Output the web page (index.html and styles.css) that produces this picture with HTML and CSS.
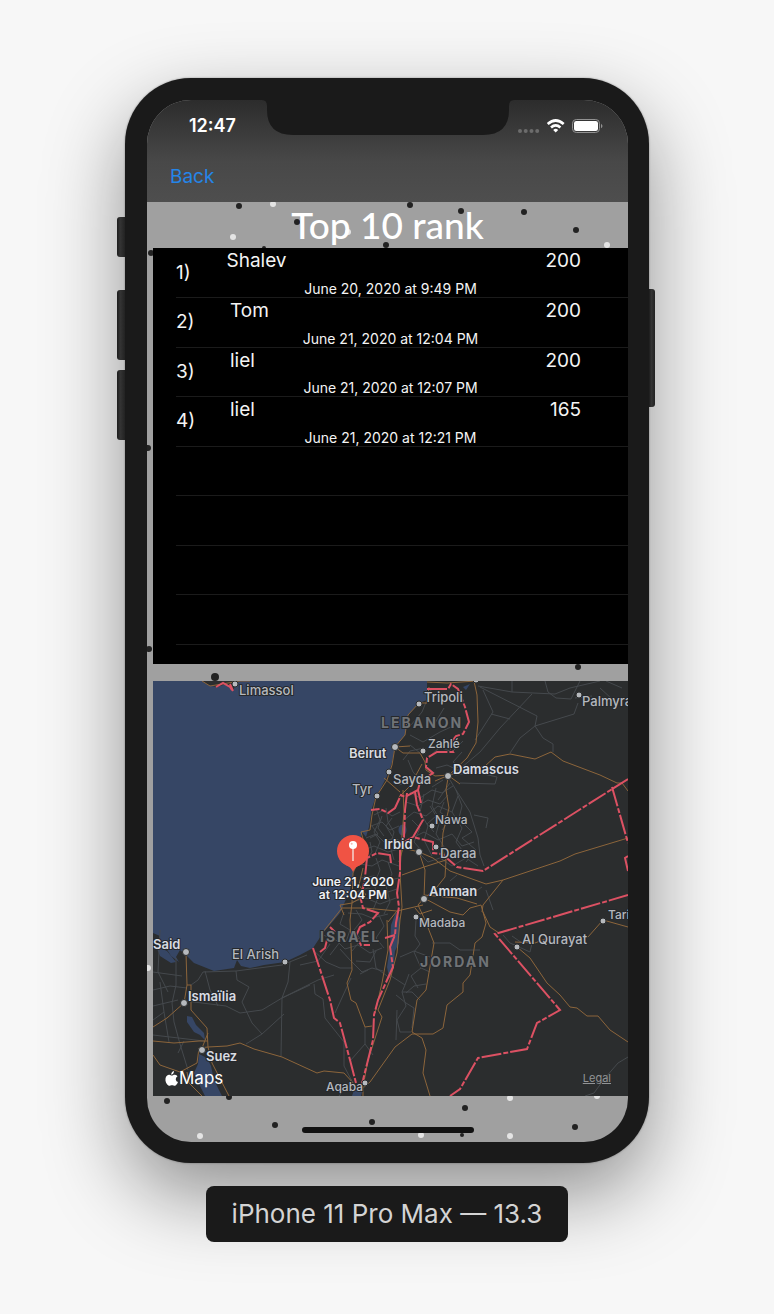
FILE: index.html
```html
<!DOCTYPE html>
<html lang="en">
<head>
<meta charset="utf-8">
<meta name="viewport" content="width=device-width, initial-scale=1">
<title>Top 10 rank</title>
<link rel="stylesheet" href="styles.css">
</head>
<body>
<main class="stage">
  <div class="phone">
    <span class="side-button mute"></span>
    <span class="side-button volume-up"></span>
    <span class="side-button volume-down"></span>
    <span class="side-button power"></span>
    <div class="screen">
      <svg class="speckles" viewBox="147 100 481 1042" aria-hidden="true">
        <g fill="#222">
          <circle cx="239" cy="206" r="3"/><circle cx="297" cy="222" r="3"/><circle cx="410" cy="205" r="3"/><circle cx="461" cy="211" r="3"/><circle cx="524" cy="212" r="3"/><circle cx="576" cy="230" r="3"/><circle cx="386" cy="245" r="3"/><circle cx="151" cy="253" r="3"/><circle cx="264" cy="248" r="2"/>
          <circle cx="148" cy="448" r="3"/><circle cx="149" cy="649" r="3"/><circle cx="215" cy="677" r="4"/><circle cx="578" cy="667" r="3"/>
          <circle cx="167" cy="1101" r="3"/><circle cx="229" cy="1097" r="3"/><circle cx="275" cy="1125" r="3"/><circle cx="372" cy="1122" r="3"/><circle cx="465" cy="1108" r="3"/><circle cx="575" cy="1127" r="3"/><circle cx="462" cy="1135" r="2"/>
        </g>
        <g fill="#e4e4e4">
          <circle cx="273" cy="204" r="3"/><circle cx="233" cy="237" r="3"/><circle cx="348" cy="232" r="3"/><circle cx="607" cy="245" r="3"/><circle cx="148" cy="968" r="3"/><circle cx="200" cy="1136" r="3"/><circle cx="421" cy="1135" r="3"/><circle cx="510" cy="1098" r="3"/><circle cx="510" cy="1136" r="3"/><circle cx="597" cy="1096" r="3"/>
        </g>
      </svg>
      <header class="top-bar">
        <div class="status">
          <time class="clock">12:47</time>
          <svg class="status-icons" width="86" height="16" viewBox="0 0 86 16" aria-label="Wi-Fi connected, battery full">
            <g fill="#6c6c6c"><circle cx="3" cy="13" r="2"/><circle cx="8.700" cy="13" r="2"/><circle cx="14.500" cy="13" r="2"/><circle cx="20.200" cy="13" r="2"/></g>
            <g fill="none" stroke="#fff" stroke-width="2.700"><path d="M30.700 6Q38.700-1 46.700 6"/><path d="M34 9.400Q38.700 5.300 43.400 9.400"/></g>
            <path d="M38.700 14.500L36.200 11.900Q38.700 9.800 41.200 11.900Z" fill="#fff"/>
            <rect x="55.500" y="1.500" width="27" height="13" rx="3.800" fill="none" stroke="#929292"/>
            <rect x="57" y="3" width="24" height="10" rx="2.300" fill="#fff"/>
            <path d="M84 5.700Q87 8 84 10.300Z" fill="#929292"/>
          </svg>
        </div>
        <svg class="notch" viewBox="0 0 252 35" aria-hidden="true"><path d="M0 0H252Q247 0 247 6V10Q247 35 221 35H31Q5 35 5 10V6Q5 0 0 0Z" fill="#1a1a1a"/></svg>
        <nav class="nav"><button class="back" type="button">Back</button></nav>
      </header>
      <h1 class="title">Top 10 rank</h1>
      <section class="scores" aria-label="Scores">
        <table class="ranking">
          <tr><td class="rank">1)</td><td class="name"><div class="name-box"><span>Shalev</span></div></td><td class="date">June 20, 2020 at 9:49 PM</td><td class="score">200</td></tr>
          <tr><td class="rank">2)</td><td class="name"><div class="name-box"><span>Tom</span></div></td><td class="date">June 21, 2020 at 12:04 PM</td><td class="score">200</td></tr>
          <tr><td class="rank">3)</td><td class="name"><div class="name-box"><span>liel</span></div></td><td class="date">June 21, 2020 at 12:07 PM</td><td class="score">200</td></tr>
          <tr><td class="rank">4)</td><td class="name"><div class="name-box"><span>liel</span></div></td><td class="date">June 21, 2020 at 12:21 PM</td><td class="score">165</td></tr>
          <tr><td colspan="4"></td></tr>
          <tr><td colspan="4"></td></tr>
          <tr><td colspan="4"></td></tr>
          <tr><td colspan="4"></td></tr>
        </table>
      </section>
      <section class="map" aria-label="Map">
        <svg class="map-canvas" viewBox="153 681 475 415">
          <rect x="153" y="681" width="475" height="415" fill="#2b2d2e"/>
          <!-- water -->
          <g fill="#364665">
            <path d="M153 681H427V700L419 703 408 715 405 735 395 747 392 762 389 772 380 790 376 796 372 808 369 827 366 837 362 832 360 842 356 862 353 873 350 890 340 913 323 933 313 948 300 955 285 962 264 965 250 968 241 966 237 960 234 968 214 971 204 967 194 963 187 956 180 950 176 957 179 962 171 956 166 948 158 944 160 936 153 933Z"/>
            <path d="M156 946L167 951 176 962 171 963 160 956ZM187 1016L192 1017 196 1025 204 1033 205 1040 200 1035 194 1032 187 1022Z"/>
            <path d="M199 1054L207 1058 211 1066 214 1080 222 1096H205L199 1084 194 1073 198 1064Z"/>
            <path d="M396 912L400 918 399 943 395 951 393 970 389 977 387 967 390 947 391 925Z"/>
            <ellipse cx="402.500" cy="830" rx="4" ry="5.500"/>
            <path d="M352 1096L354 1090 363 1088 361 1096ZM463 687L470 684 466 690Z"/>
          </g>
          <path d="M202 681L208 685 216 687 227 684 233 691 236 683 240 681Z" fill="#2b2d2e"/>
          <!-- minor roads -->
          <g class="road minor">
            <path d="M478 686L512 692 555 694 570 688 600 681M512 692V681M545 681L548 692 556 698 571 699 580 681M578 703L574 714 535 726 520 738 510 753M483 690L493 712 475 740M480 687L537 716 535 726 543 738 553 744V752M532 694L500 728 480 752 455 773M491 714L510 719M600 688L612 699M606 681L622 688M575 698L592 696"/>
            <path d="M455 775L475 772 497 777 495 784 460 783M450 780L456 790 470 812 474 825 478 838 480 855 484 866M456 790L462 806 458 822M474 815L488 818 486 828"/>
            <path d="M404 820L414 812 426 816 438 806 452 812M406 802L418 806 428 800 440 804 448 795M410 792L420 798 432 790 442 793 453 786M412 838L424 832 438 840 452 834 462 846 474 842M416 850L428 862 440 858 452 866 466 858 478 866M424 794L420 812 428 826 424 840 432 856M436 788L432 806 440 820 436 834 446 850M458 796L452 812 462 828 456 842 468 858M430 806L436 816 427 824 434 832M444 802L440 812 450 820 442 830M412 820L420 828 414 842 421 850M464 824L472 832 462 838 476 850 466 862"/>
            <path d="M374 815L384 810 392 816 400 812M371 826L382 822 390 830 399 826M366 838L376 834 384 842 394 838 402 842M364 850L374 846 388 852 399 849M360 864L372 866 382 860 399 866M360 878L374 876 386 881 399 878M356 892L368 888 382 894 397 889M352 902L366 898 380 904 396 898M348 913L362 914 372 918 388 914M376 808L380 820 374 832 380 842 374 856M386 808L388 822 394 832 390 846 394 860M376 858L380 870 374 884 378 898 372 912M388 862L392 874 386 886 390 902 384 914M382 816L378 828 384 836M370 842L372 852 366 860M344 912L340 924 350 930 346 942M356 910L362 920 354 930 361 940 352 951M378 913L384 926 376 938 384 948M372 826L378 834 370 838M392 818L386 826 392 836"/>
            <path d="M323 935L336 940 345 949 358 945 370 953 382 948M313 950L326 962 340 968 352 968M300 965L318 961 330 944M340 949L350 960 362 972 372 968 383 971M356 961L370 962 376 951M334 975L318 980 282 998M351 978L335 1013M373 949L376 968 390 978M330 955L340 942M368 970L360 974"/>
            <path d="M388 974L405 985 402 992 412 992 420 1000M405 985L409 974M402 992L406 1006 397 1020 400 1032 411 1032M406 1003L414 1008 412 1028M397 1010L396 1040M416 920L415 936 420 944 414 952 421 968 411 976 418 988M400 957L414 951 430 957M432 943L450 943 460 950 480 950M421 968L430 972M406 993L414 986 426 984M396 995L406 1003"/>
            <path d="M365 1027V1044L350 1061M365 1044L373 1055M314 984L315 994 323 999 325 1018 344 1042 344 1066 355 1087 336 1088M339 1096L352 1079"/>
            <path d="M153 990L170 986 187 988M153 1006L178 1000M160 930L158 972 168 992M176 958V985L172 1003 174 1022 180 1044 188 1070M191 985L198 980 203 972 236 971 282 965 307 955M236 971L237 980 249 987 242 1002 252 1023 262 1034 284 1014M186 1001L226 1006 240 1013 262 1010 282 998 310 985M290 962L288 982 282 998 281 1056M262 1034L246 1044M153 972L182 976M153 1020L164 1012 169 1042M153 1035L204 1041M184 1041L178 1053M205 971L210 990 218 1006M160 982L164 1012"/>
            <path d="M503 935L510 943 530 952 532 943 526 938M585 1096L594 1093 605 1078 618 1063 628 1057M486 890L493 910M512 936L522 943M450 881L457 875M455 920L447 926M482 887L470 895"/>
            <path d="M403 760L410 751 424 748M411 725L422 712 431 690M399 785L412 780 430 784M408 760L413 772 422 782M430 756L440 747 452 752 463 741M420 753L410 745M410 735L423 742 440 732 451 727M432 728L444 708M462 752L453 762 462 768M436 768L447 765 460 771M443 780L432 787M450 783L438 800"/>
          </g>
          <!-- highways -->
          <g class="road highway">
            <path d="M427 682L447 683 476 681M474 681L477 695 478 722 476 743 467 758 449 775M429 687L427 703 419 703 408 715 405 735 395 747 392 765 387 780 376 797 372 815 370 830 361 832 364 842 358 862 353 873"/>
            <path d="M395 747L403 753 420 753 425 762 426 770 435 776 449 775 485 766 495 757 510 754 535 759 551 752 563 761 600 775 617 783 622 783 628 791M410 746L395 747M435 781L449 775M399 797L410 786 422 764M384 778L400 792"/>
            <path d="M448 778L446 790 449 808 443 833 442 847 446 860 445 877 437 887 425 898M449 776L460 784"/>
            <path d="M419 852L425 870 424 898M403 848L419 852 433 858 450 871 486 884 503 880 560 861 575 854 628 838M503 880L483 905 482 912M404 848L396 840M402 875L424 867 446 860"/>
            <path d="M424 898L450 912 463 915 470 908 481 905 483 912 490 927 499 933M424 895L457 898 477 904M515 942L535 943 550 937 588 937 603 920 628 927M517 947L530 958 547 983 560 995 570 1007 577 1008 587 1016 598 1016 610 1030 628 1042"/>
            <path d="M486 923L482 937 475 943 470 975 463 983V992L447 1005 443 1028 433 1034H412L395 1047 370 1082 363 1088M486 923L483 912M424 898L418 905 425 920 434 943 426 990 417 1000 412 1032 422 1038 426 1050 423 1073 430 1096"/>
            <path d="M353 873L352 903 350 920 352 970 347 983 351 1000 356 1003 365 1027 372 1026M403 790L404 812 402 835 400 873 402 907 400 920 397 953 390 980 378 1010 382 1017 368 1060 363 1087V1096M387 920L388 950 382 983 375 1013M342 908H365L397 911 423 905M342 908L323 932M352 903L340 905 344 915M363 868L359 885 366 895 352 903M397 911L388 922M403 848L399 862M415 908L420 914 432 910"/>
            <path d="M186 953L187 985 184 1003 167 1018 153 1027M187 985H191V1010L207 1028 208 1047 227 1046 240 1043 254 1049 282 1057 317 1073 324 1071 344 1073 355 1085M153 1041L174 1043 199 1041H208M153 1055L160 1065 180 1072 197 1063 199 1048 208 1047 212 1063 229 1096M187 1072L189 1083 202 1096M208 1033L202 1048"/>
            <path d="M202 681L210 686 222 684 240 681H250"/>
          </g>
          <!-- borders -->
          <g class="border">
            <path d="M427 689H448L451 684 458 689 465 707 469 722 463 734 456 736 449 745 453 752H437L427 758 426 767 433 773 420 782 418 790 405 797 401 795 395 808 388 813 380 809 371 810"/>
            <path d="M415 792L417 805 423 820 413 837 433 842V853L442 854 457 867 483 871 628 779M413 837L404 842M418 790L421 803M612 787L628 843M628 856L625 858 628 871"/>
            <path d="M628 895L495 934 560 1010 537 1023 527 1049 478 1058 460 1089 450 1096"/>
            <path d="M313 948L330 1000 334 1018 340 1023 350 1060 356 1083 359 1088"/>
            <path d="M407 793L405 810 404 837 400 845V873L397 893 399 907 396 923 395 935 390 947 393 967 378 1000 374 1015 373 1040 363 1080 360 1088"/>
            <path d="M391 863L390 855 377 853 367 858 365 877 361 900 363 908 378 913 370 922 360 927 356 936 361 945 370 945M395 935L385 938M330 927L335 932M327 940L325 948 320 952"/>
            <path d="M216 687L223 683 230 687 232 690M230 684L233 691"/>
          </g>
          <g class="place">
            <circle cx="235" cy="684" r="3"/><circle cx="419" cy="704" r="3"/><circle cx="395" cy="747" r="3.500"/><circle cx="423" cy="751" r="3"/><circle cx="389" cy="772" r="3"/><circle cx="377" cy="796" r="3"/><circle cx="448" cy="776" r="3.500"/><circle cx="432" cy="826" r="3"/><circle cx="419" cy="852" r="3.500"/><circle cx="436" cy="847" r="3"/><circle cx="424" cy="899" r="3.500"/><circle cx="416" cy="917" r="3"/><circle cx="517" cy="947" r="3"/><circle cx="603" cy="921" r="3"/><circle cx="579" cy="695" r="3"/><circle cx="186" cy="952" r="3.500"/><circle cx="285" cy="962" r="3"/><circle cx="184" cy="1003" r="3.500"/><circle cx="202" cy="1050" r="3.500"/><circle cx="365" cy="1083" r="3"/><circle cx="476" cy="680" r="3"/>
          </g>
          <g class="country">
            <text x="381" y="728">LEBANON</text><text x="320" y="942">ISRAEL</text><text x="420" y="967">JORDAN</text>
          </g>
          <g class="city">
            <text x="239" y="695">Limassol</text><text x="424" y="702">Tripoli</text><text x="393" y="784">Sayda</text><text x="352" y="794">Tyr</text><text x="582" y="706">Palmyra</text><text x="522" y="944">Al Qurayat</text><text x="232" y="959">El Arish</text><text x="440" y="858">Daraa</text>
          </g>
          <g class="city small">
            <text x="428" y="748">Zahlé</text><text x="435" y="824">Nawa</text><text x="419" y="927">Madaba</text><text x="608" y="919">Tari</text><text x="326" y="1091">Aqaba</text>
          </g>
          <g class="city major">
            <text x="349" y="758">Beirut</text><text x="453" y="774">Damascus</text><text x="384" y="849">Irbid</text><text x="429" y="896">Amman</text><text x="153" y="949">Said</text><text x="188" y="1001">Ismaïlia</text><text x="206" y="1061">Suez</text>
          </g>
          <g>
            <circle cx="353" cy="851" r="16" fill="#f05344"/>
            <path d="M346 865.300Q351 867 353 872Q355 867 360 865.300Z" fill="#f05344"/>
            <path d="M353 848V861" stroke="#f5d4d0" stroke-width="1.500"/>
            <circle cx="353" cy="845" r="4" fill="#fff"/><circle cx="351.700" cy="843.800" r="1" fill="#f3b8b2"/>
          </g>
          <g class="pin-label"><text x="353" y="886">June 21, 2020</text><text x="353" y="899">at 12:04 PM</text></g>
        </svg>
        <div class="map-credit">
          <span class="map-brand">
            <svg width="13" height="15" viewBox="0 0 26 30" aria-hidden="true"><path d="M18 0Q18 6 12.500 7.500Q12 2 18 0ZM13 9C16 9 17 7 20 7.500Q23.500 8 25 10.500Q21 13 21.500 17Q22 21 26 22Q24 28 20.500 29.500C18 30 17 28.500 14 28.500C11 28.500 10 30 7.500 29.500C3 27 0 21 1 15C2 9 6 7 9 7.500C11 8 12 9 13 9Z" fill="#fff"/></svg>
            <span>Maps</span>
          </span>
          <a class="legal" href="#legal">Legal</a>
        </div>
      </section>
      <footer class="home-area"><span class="home-indicator"></span></footer>
    </div>
  </div>
  <p class="device-name">iPhone 11 Pro Max — 13.3</p>
</main>
</body>
</html>
```
FILE: styles.css
```css
* { box-sizing: border-box; }

body {
  margin: 0;
  background: #f7f7f7;
  font-family: Inter, "Liberation Sans", sans-serif;
}

.stage {
  display: flex;
  flex-direction: column;
  align-items: center;
  min-height: 100vh;
  padding: 78px 16px 72px;
  overflow: hidden;
}

.phone {
  position: relative;
  width: 100%;
  max-width: 524px;
  padding: 22px 21px 21px 22px;
  border-radius: 66px;
  background: #1a1a1a;
  box-shadow: 0 0 2px rgba(0, 0, 0, .4), 0 32px 80px rgba(0, 0, 0, .42);
}

.side-button {
  position: absolute;
  left: -8px;
  width: 8px;
  border-radius: 3px 0 0 3px;
  background: linear-gradient(90deg, #1c1c1c, #343434 40%, #222);
}
.mute { top: 139px; height: 40px; }
.volume-up { top: 212px; height: 70px; }
.volume-down { top: 292px; height: 70px; }
.power {
  top: 211px;
  right: -6px;
  left: auto;
  width: 6px;
  height: 118px;
  border-radius: 0 3px 3px 0;
}

.screen {
  position: relative;
  overflow: hidden;
  border-radius: 44px;
  background: #a0a0a0;
}

.speckles {
  position: absolute;
  inset: 0;
  width: 100%;
  height: 100%;
}

.top-bar {
  position: relative;
  background: linear-gradient(#2c2c2c, #484848 60%, #4e4e4e);
}

.status {
  display: flex;
  justify-content: space-between;
  align-items: center;
  height: 52px;
  padding: 0 25px 0 42px;
}

.clock {
  color: #fff;
  font-size: 18px;
  font-weight: 600;
  line-height: 24px;
}

.notch {
  position: absolute;
  top: 0;
  left: 50%;
  width: 252px;
  transform: translateX(-50%);
}

.nav {
  display: flex;
  align-items: center;
  height: 50px;
  padding: 0 23px;
}

.back {
  padding: 0;
  border: 0;
  background: none;
  color: #2585e8;
  font: 400 19px/24px Inter, "Liberation Sans", sans-serif;
}

.title {
  position: relative;
  margin: 0;
  color: #fff;
  font: 500 37px/46px Lato, sans-serif;
  text-align: center;
}

.scores {
  position: relative;
  min-height: 416px;
  margin-left: 6px;
  padding-left: 23px;
  background: #000;
}

.ranking {
  width: 100%;
  height: 397px;
  border-collapse: collapse;
  table-layout: fixed;
  color: #f4f4f4;
  font-size: 19px;
  line-height: 26px;
}

.ranking tr { height: 12.5%; }

.ranking td {
  padding: 0;
  border-bottom: 1px solid #1b1b1b;
  vertical-align: top;
}
.ranking .rank { width: 54px; vertical-align: middle; }
.ranking .name { width: 53px; }
.ranking .date {
  font-size: 14px;
  line-height: 16px;
  text-align: center;
  vertical-align: bottom;
  white-space: nowrap;
}
.ranking .score { width: 130px; padding-right: 47px; text-align: right; }

.name-box {
  display: flex;
  justify-content: center;
}
.name-box span { flex: none; min-width: 100%; }

.map {
  position: relative;
  margin: 17px 0 0 6px;
}
.map-canvas {
  display: block;
  width: 100%;
  height: auto;
}

.road { fill: none; stroke-linejoin: round; }
.minor { stroke: #45494d; stroke-width: 1; }
.highway { stroke: #8c653b; stroke-width: 1; }
.border {
  fill: none;
  stroke: #dc5163;
  stroke-width: 2;
  stroke-dasharray: 20 2 5 2;
}

.place { fill: #b6b9bd; stroke: #2b2d2e; stroke-width: 1; }

.country, .city, .pin-label {
  paint-order: stroke;
  stroke: #25282c;
  stroke-width: 2px;
  stroke-linejoin: round;
}
.country {
  fill: #707376;
  font-size: 14px;
  font-weight: 700;
  letter-spacing: 2px;
}
.city { fill: #b5b8be; font-size: 13px; font-weight: 500; }
.small { font-size: 12px; }
.major { fill: #d9dce2; font-weight: 600; }
.pin-label {
  fill: #f0f1f4;
  font-size: 12px;
  font-weight: 600;
  text-anchor: middle;
}

.map-credit {
  position: absolute;
  right: 17px;
  bottom: 6px;
  left: 12px;
  display: flex;
  justify-content: space-between;
  align-items: center;
}
.map-brand {
  display: flex;
  align-items: center;
  gap: 1px;
  color: #fff;
  font-size: 17px;
  line-height: 24px;
}
.legal {
  color: #929496;
  font-size: 11px;
  line-height: 16px;
}

.home-area {
  position: relative;
  display: flex;
  justify-content: center;
  align-items: flex-end;
  height: 46px;
  padding-bottom: 9px;
}
.home-indicator {
  width: 172px;
  height: 6px;
  border-radius: 3px;
  background: #111;
}

.device-name {
  position: relative;
  margin: 23px 0 0;
  padding: 0 26px;
  border-radius: 8px;
  background: #1a1a1a;
  color: #d4d4d4;
  font-size: 26px;
  line-height: 56px;
}
```
